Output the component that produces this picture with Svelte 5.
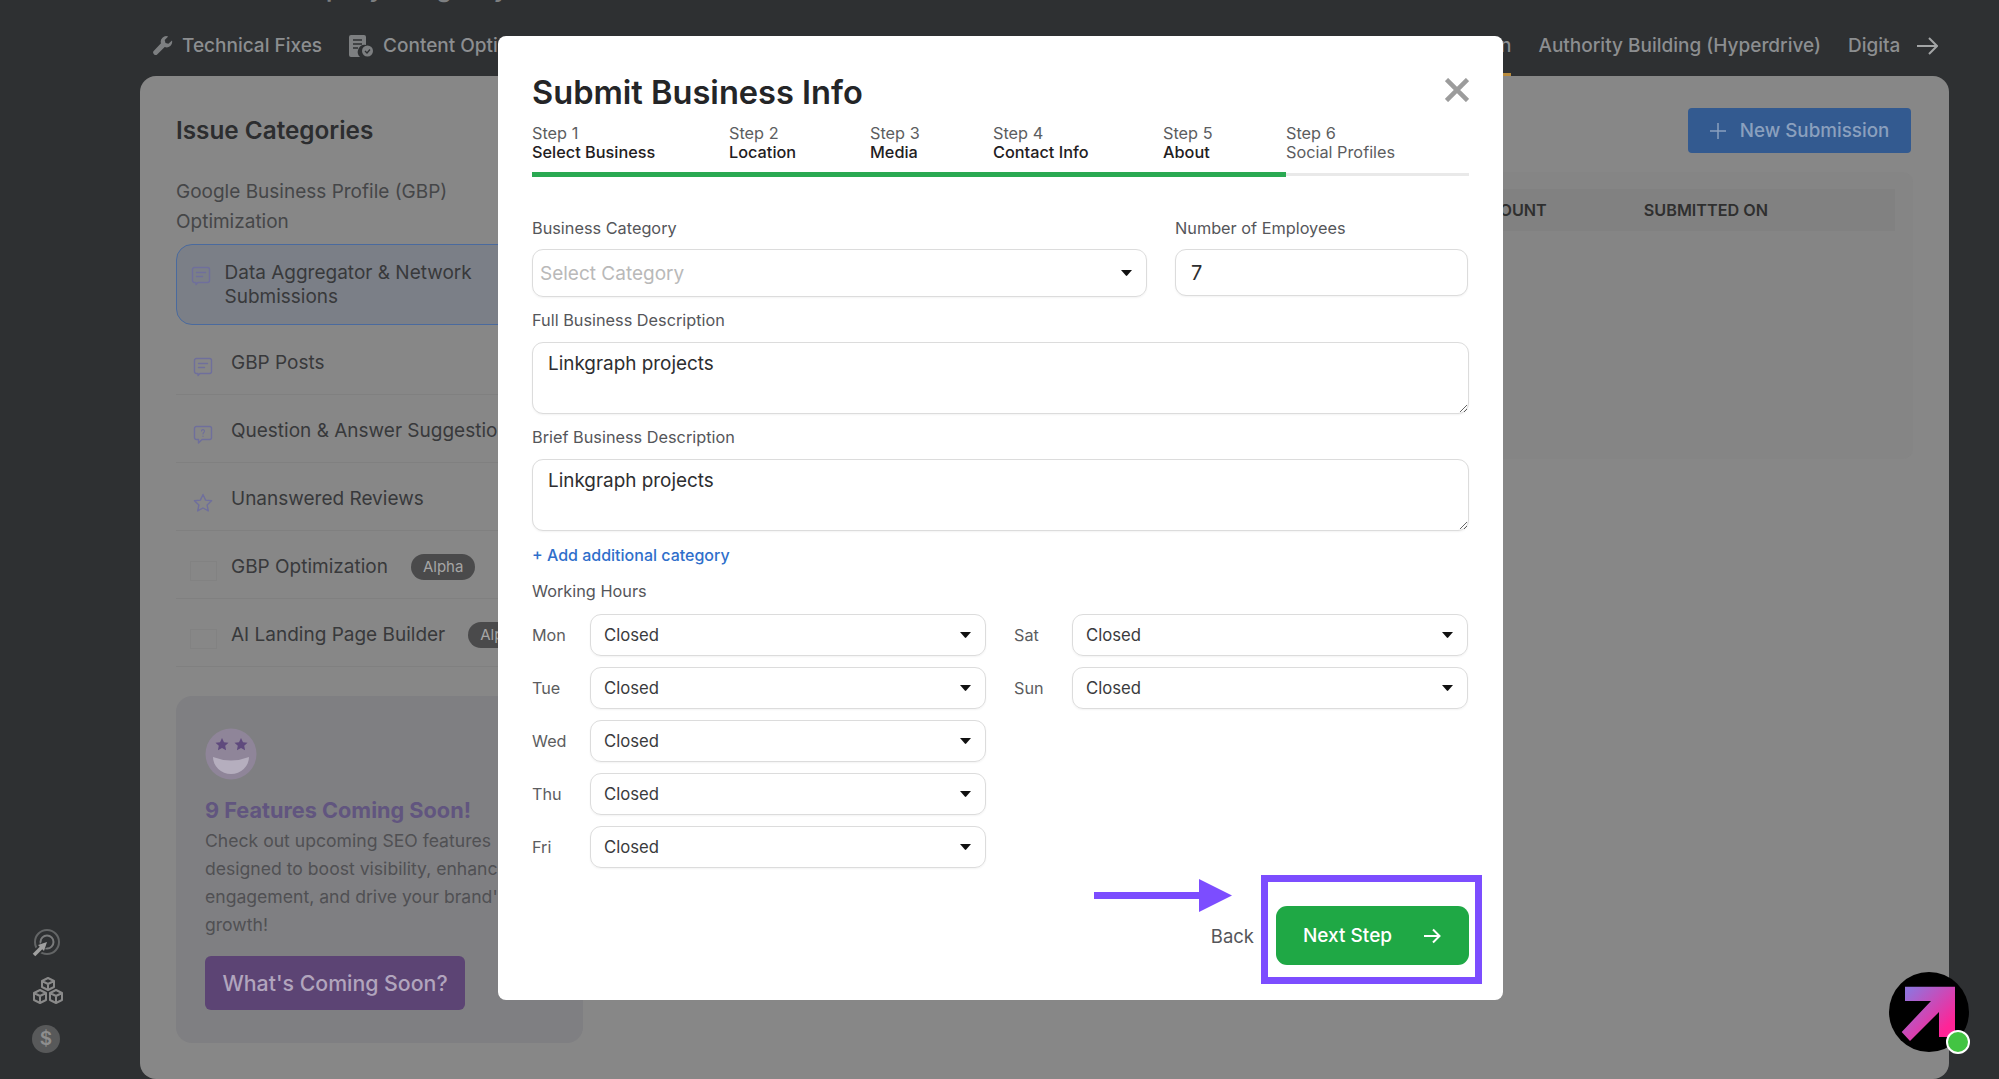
<script lang="ts">
    const rows = [
        { name: 'GBP Posts', icon: 'doc' },
        { name: 'Question & Answer Suggestions', icon: 'question' },
        { name: 'Unanswered Reviews', icon: 'star' },
        { name: 'GBP Optimization', icon: 'blank', badge: 'Alpha' },
        { name: 'AI Landing Page Builder', icon: 'blank', badge: 'Alpha' }
    ];

    const steps = [
        { n: 'Step 1', label: 'Select Business', width: 197, done: true },
        { n: 'Step 2', label: 'Location', width: 141, done: true },
        { n: 'Step 3', label: 'Media', width: 123, done: true },
        { n: 'Step 4', label: 'Contact Info', width: 170, done: true },
        { n: 'Step 5', label: 'About', width: 123, done: true },
        { n: 'Step 6', label: 'Social Profiles', width: 183, done: false }
    ];

    const weekdays = ['Mon', 'Tue', 'Wed', 'Thu', 'Fri'];
    const weekend = ['Sat', 'Sun'];
</script>

{#snippet caret()}
    <svg class="caret" viewBox="0 0 11 6" width="11" height="6"><path d="M0 0h11L6.2 5.6a1 1 0 0 1-1.4 0z" fill="#111" /></svg>
{/snippet}

{#snippet docIcon()}
    <svg viewBox="0 0 20 20" width="20" height="20" fill="none" stroke="#6f6f9c" stroke-width="1.4" stroke-linecap="round" stroke-linejoin="round">
        <path d="M3.5 1.5h13a2 2 0 0 1 2 2v11a2 2 0 0 1-2 2H7l-2 2v-2H3.500a2 2 0 0 1-2-2v-11a2 2 0 0 1 2-2z" />
        <path d="M5.500 6.500h9M5.500 10.500h6" />
    </svg>
{/snippet}

<div class="page">
    <aside class="rail">
        <svg viewBox="0 0 28 28" width="28" height="28" fill="none" stroke-width="2">
            <circle cx="15" cy="13" r="12" stroke="#636566" />
            <circle cx="15" cy="13" r="6.500" stroke="#7a7b7c" />
            <path d="M2 26L13 15" stroke="#2e3032" stroke-width="7" />
            <path d="M2 26L11 17" stroke="#a0a0a0" stroke-width="3.500" />
            <path d="M6 16L15 13L12 22Z" fill="#a0a0a0" />
        </svg>
        <svg viewBox="0 0 32 28" width="32" height="28" fill="none" stroke="#8a8a8a" stroke-width="2" stroke-linejoin="round">
            <path d="M16 1l6 3v6l-6 3-6-3V4zM10 4l6 3 6-3M16 7v6" />
            <path d="M8 13l6 3v7l-6 3-6-3v-7zM2 16l6 3 6-3M8 19v7" />
            <path d="M24 13l6 3v7l-6 3-6-3v-7zM18 16l6 3 6-3M24 19v7" />
        </svg>
        <div class="dollar">$</div>
    </aside>

    <div class="content">
        <div class="crumb">Company Agency</div>
        <nav class="tabs">
            <div class="tab-group">
                <span class="tab">
                    <svg viewBox="0 0 20 20" width="20" height="20" fill="#7d7f81"><path d="M19 4.500l-3.600 3.200-2.900-.8-.8-2.900L15.200.500A5.500 5.500 0 0 0 8 7.300L.9 14.800a2.400 2.400 0 0 0 3.500 3.400l7.300-7.200A5.500 5.500 0 0 0 19 4.500z" /></svg>
                    Technical Fixes
                </span>
                <span class="tab">
                    <svg viewBox="0 0 25 22" width="25" height="22"><path d="M2 0h13a2 2 0 0 1 2 2v8a7 7 0 0 0-6 12H2a2 2 0 0 1-2-2V2a2 2 0 0 1 2-2z" fill="#7d7f81" /><path d="M4 5h9M4 9h9M4 13h5" stroke="#2e3032" stroke-width="1.500" /><circle cx="18.500" cy="16" r="5.500" fill="#7d7f81" /><path d="M16 16l2 2 3-3.500" stroke="#2e3032" stroke-width="1.300" fill="none" /></svg>
                    Content Optimization
                </span>
            </div>
            <div class="tab-group">
                <span class="tab active">Local Optimization</span>
                <span class="tab">Authority Building (Hyperdrive)</span>
                <span class="tab cut">Digital PR</span>
                <svg class="more" viewBox="0 0 21 18" width="21" height="18" fill="none" stroke="#a3a5a6" stroke-width="2"><path d="M0 9h20M12 1l8 8-8 8" /></svg>
            </div>
        </nav>

        <main class="panel">
            <section class="side">
                <h2>Issue Categories</h2>
                <p class="group">Google Business Profile (GBP) Optimization</p>
                <div class="item current">
                    {@render docIcon()}
                    <span>Data Aggregator &amp; Network<br />Submissions</span>
                </div>
                {#each rows as row}
                    <div class="item">
                        {#if row.icon === 'doc'}
                            {@render docIcon()}
                        {:else if row.icon === 'question'}
                            <svg viewBox="0 0 20 20" width="20" height="20" fill="none" stroke="#6f6f9c" stroke-width="1.400" stroke-linejoin="round">
                                <path d="M3.500 1.500h13a2 2 0 0 1 2 2v9a2 2 0 0 1-2 2H9l-3.500 3.500v-3.500h-2a2 2 0 0 1-2-2v-9a2 2 0 0 1 2-2z" />
                                <path d="M8.500 6a1.500 1.500 0 1 1 2 1.500L10 9M10 11v.5" stroke-width="1.100" stroke-linecap="round" />
                            </svg>
                        {:else if row.icon === 'star'}
                            <svg viewBox="0 0 20 20" width="20" height="20" fill="none" stroke="#6f6f9c" stroke-width="1.400" stroke-linejoin="round">
                                <path d="M10 1.500l2.600 5.600 6 .7-4.500 4.100 1.200 6L10 15l-5.300 2.900 1.200-6-4.500-4.100 6-.7z" />
                            </svg>
                        {:else}
                            <span class="blank"></span>
                        {/if}
                        <span>{row.name}</span>
                        {#if row.badge}<em class="badge">{row.badge}</em>{/if}
                    </div>
                {/each}

                <div class="promo">
                    <svg class="smile" viewBox="0 0 52 52" width="52" height="52">
                        <circle cx="26" cy="26" r="25.500" fill="#8f8599" />
                        <path d="M8 29q18 7 36 0a18 17 0 0 1-36 0z" fill="#b5aebe" />
                        <path d="M17 10l2 4.200 4.500.5-3.300 3 .9 4.500-4.100-2.300-4.100 2.300.9-4.500-3.300-3 4.500-.5zM36 10l2 4.200 4.500.5-3.300 3 .9 4.500-4.100-2.300-4.100 2.300.9-4.500-3.300-3 4.500-.5z" fill="#5f4a7d" />
                    </svg>
                    <h3>9 Features Coming Soon!</h3>
                    <p>Check out upcoming SEO features<br />designed to boost visibility, enhance user<br />engagement, and drive your brand's online<br />growth!</p>
                    <div class="soon">What's Coming Soon?</div>
                </div>
            </section>

            <section class="main">
                <div class="main-top">
                    <div class="new">
                        <svg viewBox="0 0 16 16" width="16" height="16" stroke="#8ba0be" stroke-width="1.500"><path d="M8 0v16M0 8h16" /></svg>
                        New Submission
                    </div>
                </div>
                <div class="table">
                    <div class="thead">
                        <span>BUSINESS</span>
                        <span class="tcount">COUNT</span>
                        <span class="tdate">SUBMITTED ON</span>
                    </div>
                </div>
            </section>
        </main>
    </div>

    <div class="modal">
        <header class="modal-head">
            <h1>Submit Business Info</h1>
            <svg viewBox="0 0 24 24" width="24" height="24" stroke="#9c9c9c" stroke-width="4.500"><path d="M1.500 1.500l21 21M22.500 1.500l-21 21" /></svg>
        </header>

        <div class="steps">
            {#each steps as step}
                <div class="step" class:todo={!step.done} style="width:{step.width}px">
                    <span>{step.n}</span>
                    <b>{step.label}</b>
                </div>
            {/each}
        </div>
        <div class="progress"><i></i></div>

        <div class="two">
            <div>
                <div class="label first">Business Category</div>
                <div class="select big placeholder">Select Category {@render caret()}</div>
            </div>
            <div>
                <div class="label first">Number of Employees</div>
                <input class="num" value="7" readonly />
            </div>
        </div>

        <label class="label" for="full">Full Business Description</label>
        <textarea id="full" readonly>Linkgraph projects</textarea>
        <label class="label" for="brief">Brief Business Description</label>
        <textarea id="brief" readonly>Linkgraph projects</textarea>

        <div class="add">+ Add additional category</div>
        <div class="label hours-label">Working Hours</div>

        <div class="hours">
            <div class="col">
                {#each weekdays as day}
                    <div class="day">
                        <span>{day}</span>
                        <div class="select">Closed {@render caret()}</div>
                    </div>
                {/each}
            </div>
            <div class="col">
                {#each weekend as day}
                    <div class="day">
                        <span>{day}</span>
                        <div class="select">Closed {@render caret()}</div>
                    </div>
                {/each}
            </div>
        </div>

        <footer class="modal-foot">
            <span class="back">Back</span>
            <div class="next">
                Next Step
                <svg viewBox="0 0 18 16" width="18" height="16" fill="none" stroke="#fff" stroke-width="2"><path d="M1 8h15M10 1.500L16.500 8 10 14.500" /></svg>
            </div>
        </footer>
    </div>

    <!-- tutorial annotation drawn over the modal -->
    <svg class="pointer" viewBox="0 0 138 33" width="138" height="33"><path d="M0 13h105V0l33 16.500L105 33V20H0z" fill="#7c4dff" /></svg>
    <div class="highlight"></div>

    <div class="chat">
        <svg viewBox="0 0 80 80" width="80" height="80">
            <defs>
                <linearGradient id="grad" x1="0" y1="0" x2="1" y2="1">
                    <stop offset="0.100" stop-color="#9272dc" />
                    <stop offset="0.800" stop-color="#ff2496" />
                </linearGradient>
            </defs>
            <circle cx="40" cy="40" r="40" fill="#000" />
            <path d="M16 14.700H66V65H50V40L21 69 12.700 60 42 29H16z" fill="url(#grad)" />
        </svg>
        <i></i>
    </div>
</div>

<style>
    :global(body) {
        margin: 0;
    }

    .page {
        position: relative;
        display: flex;
        width: 1999px;
        height: 1079px;
        overflow: hidden;
        background: #2e3032;
        font-family: Inter, "Liberation Sans", sans-serif;
    }

    /* left rail */
    .rail {
        width: 140px;
        flex: none;
        display: flex;
        flex-direction: column;
        align-items: flex-start;
        justify-content: flex-end;
        gap: 20px;
        padding: 0 0 26px 32px;
        box-sizing: border-box;
    }

    .dollar {
        width: 28px;
        height: 28px;
        border-radius: 50%;
        background: #58595a;
        color: #8e8e8e;
        font-size: 19px;
        font-weight: 600;
        line-height: 28px;
        text-align: center;
    }

    .content {
        flex: 1;
        min-width: 0;
        display: flex;
        flex-direction: column;
    }

    /* page title, almost entirely scrolled out of view */
    .crumb {
        height: 22px;
        margin-top: -22px;
        flex: none;
        padding-left: 132px;
        color: #7d7f81;
        font-size: 24px;
        font-weight: 600;
        line-height: 22px;
        word-spacing: 30px;
        white-space: nowrap;
    }

    /* tabs */
    .tabs {
        height: 76px;
        flex: none;
        display: flex;
        justify-content: space-between;
        padding: 0 61px 0 13px;
    }

    .tab-group {
        display: flex;
        align-items: center;
        gap: 27px;
    }

    .tab {
        position: relative;
        height: 76px;
        display: flex;
        align-items: center;
        gap: 9px;
        padding-top: 15px;
        box-sizing: border-box;
        color: #8c8e90;
        font-size: 19px;
        font-weight: 500;
        white-space: nowrap;
    }

    .tab.active::after {
        content: "";
        position: absolute;
        left: 0;
        right: 0;
        bottom: 0;
        height: 3px;
        background: #b98b3d;
    }

    .tab.cut {
        width: 52px;
        overflow: hidden;
    }

    .more {
        margin-left: -10px;
        margin-top: 15px;
    }

    /* page panel behind the modal */
    .panel {
        flex: 1;
        display: flex;
        margin-right: 50px;
        padding: 32px 36px 0;
        box-sizing: border-box;
        min-height: 0;
        overflow: hidden;
        border-radius: 16px;
        background: #878787;
    }

    .side {
        width: 406px;
        flex: none;
    }

    h2 {
        margin: 5px 0 0;
        color: #2c2d2f;
        font-size: 24.300px;
        font-weight: 600;
        line-height: 34px;
    }

    .group {
        width: 320px;
        margin: 30px 0 7px;
        color: #454648;
        font-size: 19px;
        line-height: 30px;
    }

    .item {
        height: 59px;
        margin: 0 0 8px 0;
        padding-left: 17px;
        display: flex;
        align-items: center;
        gap: 18px;
        border-bottom: 1px solid #808080;
        color: #38393b;
        font-size: 19px;
        white-space: nowrap;
    }

    .item svg,
    .item .blank {
        flex: none;
        margin-top: 4px;
    }

    .item > span:not(.blank) {
        margin-bottom: 4px;
    }

    .item.current {
        height: 81px;
        width: 400px;
        margin-bottom: 10px;
        padding-left: 13.500px;
        gap: 14px;
        box-sizing: border-box;
        border: 1.500px solid #4a6a9e;
        border-radius: 16px;
        background: #7b7f87;
        line-height: 24px;
    }

    .item.current svg {
        margin: 0 0 18px;
    }

    .item.current > span {
        margin: 0;
    }

    .blank {
        width: 27px;
        height: 20px;
        margin-left: -3px;
        margin-right: -4px;
        box-sizing: border-box;
        border: 1px solid #828282;
    }

    .badge {
        margin-left: 5px;
        margin-bottom: 4px;
        padding: 0 12px;
        border-radius: 14px;
        background: #4a4a4b;
        color: #a5a5a5;
        font-size: 15px;
        font-style: normal;
        line-height: 26px;
    }

    .promo {
        width: 407px;
        height: 347px;
        margin-top: 29px;
        padding: 32px 29px;
        box-sizing: border-box;
        border-radius: 16px;
        background: #7f7f82;
    }

    .smile {
        display: block;
    }

    h3 {
        margin: 14px 0 0;
        color: #61557f;
        font-size: 21.700px;
        font-weight: 700;
        line-height: 33px;
    }

    .promo p {
        margin: 0;
        color: #505053;
        font-size: 17.600px;
        line-height: 28px;
        white-space: nowrap;
    }

    .soon {
        width: 260px;
        height: 54px;
        margin-top: 17px;
        border-radius: 6px;
        background: #5c4474;
        color: #b1a5bd;
        font-size: 21.300px;
        font-weight: 500;
        line-height: 54px;
        text-align: center;
    }

    .main {
        flex: 1;
        min-width: 0;
    }

    .main-top {
        display: flex;
        justify-content: flex-end;
        margin-right: 2px;
    }

    .new {
        width: 223px;
        height: 45px;
        display: flex;
        align-items: center;
        justify-content: center;
        gap: 14px;
        border-radius: 4px;
        background: #335a90;
        color: #8ba0be;
        font-size: 18.800px;
        font-weight: 500;
    }

    .table {
        height: 287px;
        margin-top: 19px;
        padding: 17px 18px 0;
        box-sizing: border-box;
        border-radius: 10px;
        background: #858585;
    }

    .thead {
        height: 42px;
        display: flex;
        align-items: center;
        padding-left: 20px;
        background: #818181;
        color: #2f2f2f;
        font-size: 16.200px;
        font-weight: 600;
    }

    .tcount {
        margin-left: auto;
    }

    .tdate {
        margin-left: 97px;
        margin-right: 127px;
    }

    /* modal */
    .modal {
        position: absolute;
        left: 498px;
        top: 36px;
        width: 1005px;
        height: 964px;
        padding: 32px 34px 0;
        box-sizing: border-box;
        border-radius: 8px;
        background: #fff;
    }

    .modal-head {
        height: 48px;
        display: flex;
        align-items: center;
        justify-content: space-between;
    }

    .modal-head svg {
        margin-bottom: 4px;
    }

    h1 {
        margin: 0;
        color: #242527;
        font-size: 32.600px;
        font-weight: 600;
    }

    .steps {
        display: flex;
        margin-top: 8px;
    }

    .step {
        display: flex;
        flex-direction: column;
        flex: none;
        color: #5c5d60;
        font-size: 16.300px;
        line-height: 19px;
    }

    .step b {
        color: #1f2022;
        font-weight: 500;
    }

    .step.todo b {
        color: #5c5d60;
        font-weight: 400;
    }

    .progress {
        position: relative;
        height: 3px;
        margin-top: 11px;
        background: #e9e9e9;
    }

    .progress i {
        position: absolute;
        left: 0;
        top: -1px;
        width: 754px;
        height: 5px;
        background: #2aa952;
    }

    .two {
        display: grid;
        grid-template-columns: 615px 293px;
        gap: 28px;
    }

    .label {
        display: block;
        margin: 13px 0 12px;
        color: #55565a;
        font-size: 16.300px;
        line-height: 20px;
    }

    .label.first {
        margin: 42px 0 11px;
    }

    .select {
        height: 42px;
        padding: 0 14px 0 13px;
        display: flex;
        align-items: center;
        justify-content: space-between;
        box-sizing: border-box;
        border: 1.500px solid #dcdcdc;
        border-radius: 11px;
        box-shadow: 0 1px 2px rgba(0, 0, 0, 0.05);
        color: #3a3b3d;
        font-size: 16.700px;
    }

    .select.big {
        height: 48px;
        padding: 0 14px 0 7px;
        font-size: 19px;
    }

    .placeholder {
        color: #b9b9b9;
    }

    .num {
        display: block;
        width: 100%;
        height: 47px;
        padding: 0 15px;
        box-sizing: border-box;
        border: 1.500px solid #dcdcdc;
        border-radius: 11px;
        box-shadow: 0 1px 2px rgba(0, 0, 0, 0.05);
        outline: none;
        color: #2d2e30;
        font-family: inherit;
        font-size: 20px;
    }

    textarea {
        display: block;
        width: 100%;
        height: 72px;
        padding: 9px 15px;
        box-sizing: border-box;
        border: 1.500px solid #dcdcdc;
        border-radius: 11px;
        box-shadow: 0 1px 2px rgba(0, 0, 0, 0.05);
        outline: none;
        color: #2d2e30;
        font-family: inherit;
        font-size: 18.900px;
        line-height: 24px;
    }

    .add {
        margin-top: 14px;
        color: #2f6fcb;
        font-size: 16px;
        font-weight: 500;
        line-height: 20px;
    }

    .label.hours-label {
        margin: 16px 0 13px;
    }

    .hours {
        display: grid;
        grid-template-columns: 454px 454px;
        gap: 28px;
    }

    .col {
        display: flex;
        flex-direction: column;
        gap: 11px;
    }

    .day {
        display: grid;
        grid-template-columns: 58px 396px;
        align-items: center;
        color: #5c5d60;
        font-size: 16.200px;
    }

    .modal-foot {
        margin-top: 38px;
        display: flex;
        align-items: center;
        justify-content: flex-end;
        gap: 22px;
    }

    .back {
        color: #55565a;
        font-size: 18.500px;
    }

    .next {
        width: 193px;
        height: 59px;
        padding: 0 28px 0 27px;
        display: flex;
        align-items: center;
        justify-content: space-between;
        box-sizing: border-box;
        border-radius: 11px;
        background: #1fa845;
        color: #fff;
        font-size: 19px;
        font-weight: 500;
    }

    .pointer {
        position: absolute;
        left: 1094px;
        top: 879px;
    }

    .highlight {
        position: absolute;
        left: 1261px;
        top: 875px;
        width: 221px;
        height: 109px;
        box-sizing: border-box;
        border: 7px solid #7c4dff;
    }

    .chat {
        position: absolute;
        left: 1889px;
        top: 972px;
        width: 80px;
        height: 80px;
    }

    .chat svg {
        display: block;
    }

    .chat i {
        position: absolute;
        right: -1px;
        bottom: -2px;
        width: 20px;
        height: 20px;
        border: 2px solid #fff;
        border-radius: 50%;
        background: #43c443;
    }
</style>
